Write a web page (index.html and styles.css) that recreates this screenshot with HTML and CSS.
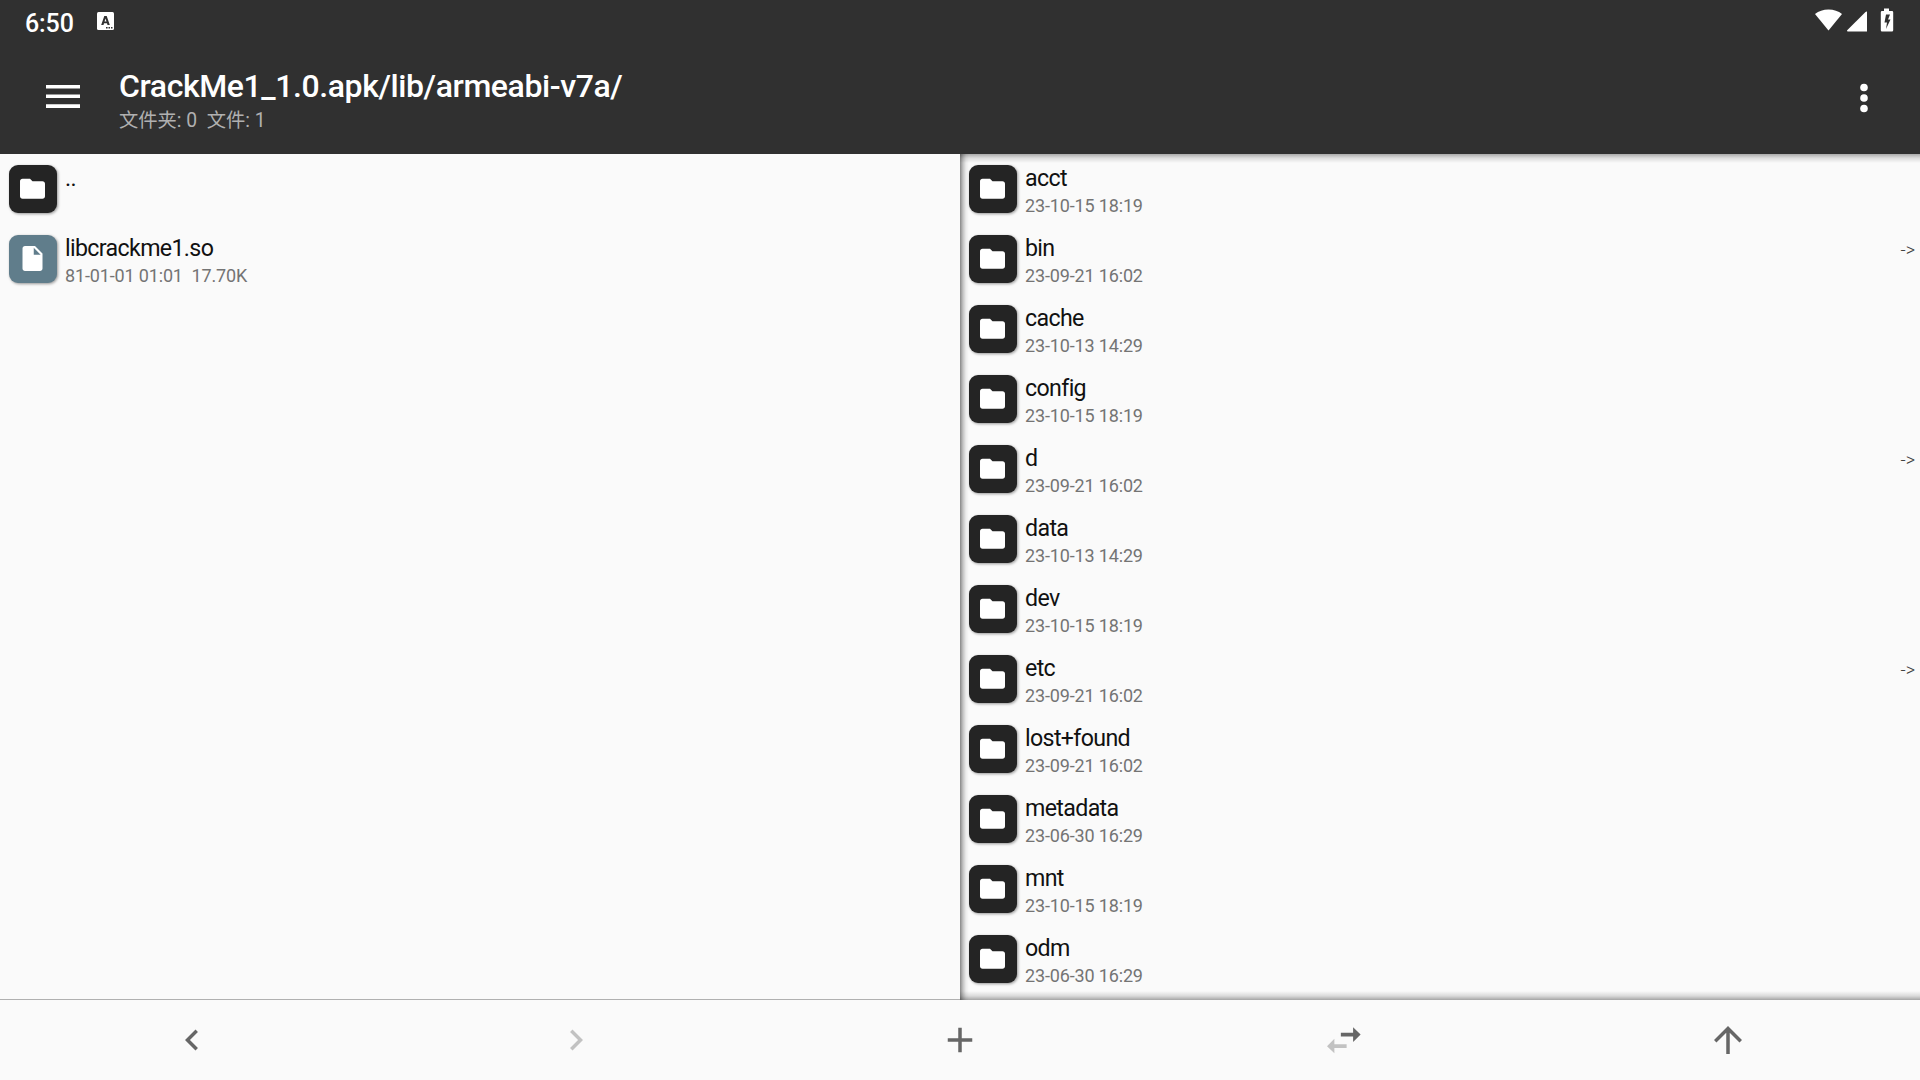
FILE: index.html
```html
<!DOCTYPE html>
<html lang="zh-CN">
<head>
<meta charset="utf-8">
<title>File manager</title>
<link rel="stylesheet" href="styles.css">
</head>
<body>
<svg width="0" height="0" class="defs">
  <symbol id="folder" viewBox="0.4 0.2 24 24"><path d="M10 4H4c-1.1 0-1.99.9-1.99 2L2 18c0 1.1.9 2 2 2h16c1.1 0 2-.9 2-2V8c0-1.1-.9-2-2-2h-8l-2-2z"/></symbol>
  <symbol id="file" viewBox="0.4 0.5 24 24"><path d="M6 2c-1.1 0-1.99.9-1.99 2L4 20c0 1.1.89 2 1.99 2H18c1.1 0 2-.9 2-2V8l-6-6H6zm7 7V3.5L18.5 9H13z"/></symbol>
</svg>
<div class="app">
  <header class="top">
    <div class="status">
      <span class="clock">6:50</span>
      <svg class="keyboard" width="17" height="18" viewBox="0 0 17 18"><rect width="17" height="18" rx="1.5" fill="#fff"/><path d="M4.2 13 7.3 4h2.4l3.1 9h-2.3l-.5-1.7H7L6.500 13zM7.500 9.600h2L8.500 6.400z" fill="#303030" fill-rule="evenodd"/><path d="M9 15h1.600v1.500H9zM11.500 15h1.500v1.500h-1.500zM14 15h1.500v1.500H14z" fill="#303030"/></svg>
      <span class="spacer"></span>
      <svg class="signals" width="80" height="24" viewBox="0 -.5 80 24" fill="#fff"><path d="M0 5.500Q5.500 1 13.500 1T27 5.500L13.500 22z"/><path d="M52 3v20H32.500q-.8-.6-.3-1.200L50.500 3.500q.8-.7 1.500-.5z"/><path fill-rule="evenodd" d="M69 0h5v2.500h3q1.200 0 1.200 1.200v18q0 1.200-1.200 1.200H67q-1.200 0-1.200-1.200v-18q0-1.200 1.200-1.200h2zM71 6l-1.500 8h2.500l-1 6.500L75.500 11H73l2-5z"/></svg>
    </div>
    <div class="toolbar">
      <svg class="menu" width="34" height="23" viewBox="0 0 34 23" fill="#fff"><path d="M0 0h34v3.500H0zM0 9.600h34v3.500H0zM0 19.300h34V23H0z"/></svg>
      <div class="heading">
        <h1>CrackMe1_1.0.apk/lib/armeabi-v7a/</h1>
        <p>文件夹: 0&nbsp; 文件: 1</p>
      </div>
      <svg class="more" width="8" height="30" viewBox="0 0 8 30" fill="#fff"><circle cx="4" cy="4.500" r="3.800"/><circle cx="4" cy="15" r="3.800"/><circle cx="4" cy="25.500" r="3.800"/></svg>
    </div>
  </header>
  <main class="panes">
    <section class="pane left">
      <div class="row"><span class="tile"><svg><use href="#folder"/></svg></span><div class="info"><b>..</b></div></div>
      <div class="row"><span class="tile so"><svg><use href="#file"/></svg></span><div class="info"><b>libcrackme1.so</b><small>81-01-01 01:01&nbsp; 17.70K</small></div></div>
    </section>
    <section class="pane right">
      <div class="row"><span class="tile"><svg><use href="#folder"/></svg></span><div class="info"><b>acct</b><small>23-10-15 18:19</small></div></div>
      <div class="row"><span class="tile"><svg><use href="#folder"/></svg></span><div class="info"><b>bin</b><small>23-09-21 16:02</small></div><i>-&gt;</i></div>
      <div class="row"><span class="tile"><svg><use href="#folder"/></svg></span><div class="info"><b>cache</b><small>23-10-13 14:29</small></div></div>
      <div class="row"><span class="tile"><svg><use href="#folder"/></svg></span><div class="info"><b>config</b><small>23-10-15 18:19</small></div></div>
      <div class="row"><span class="tile"><svg><use href="#folder"/></svg></span><div class="info"><b>d</b><small>23-09-21 16:02</small></div><i>-&gt;</i></div>
      <div class="row"><span class="tile"><svg><use href="#folder"/></svg></span><div class="info"><b>data</b><small>23-10-13 14:29</small></div></div>
      <div class="row"><span class="tile"><svg><use href="#folder"/></svg></span><div class="info"><b>dev</b><small>23-10-15 18:19</small></div></div>
      <div class="row"><span class="tile"><svg><use href="#folder"/></svg></span><div class="info"><b>etc</b><small>23-09-21 16:02</small></div><i>-&gt;</i></div>
      <div class="row"><span class="tile"><svg><use href="#folder"/></svg></span><div class="info"><b>lost+found</b><small>23-09-21 16:02</small></div></div>
      <div class="row"><span class="tile"><svg><use href="#folder"/></svg></span><div class="info"><b>metadata</b><small>23-06-30 16:29</small></div></div>
      <div class="row"><span class="tile"><svg><use href="#folder"/></svg></span><div class="info"><b>mnt</b><small>23-10-15 18:19</small></div></div>
      <div class="row"><span class="tile"><svg><use href="#folder"/></svg></span><div class="info"><b>odm</b><small>23-06-30 16:29</small></div></div>
    </section>
  </main>
  <nav class="bottom">
    <span><svg viewBox="0 0 24 24"><path d="M15.410 16.590 10.830 12l4.580-4.590L14 6l-6 6 6 6z"/></svg></span>
    <span><svg viewBox="0 0 24 24" class="off"><path d="M8.590 16.590 13.170 12 8.590 7.410 10 6l6 6-6 6z"/></svg></span>
    <span><svg viewBox="0 0 24 24"><path d="M19 13h-6v6h-2v-6H5v-2h6V5h2v6h6z"/></svg></span>
    <span><svg viewBox="0 0 24 24"><path class="off" d="M6.500 11.300 2.300 15.500l4.200 4.100v-3H13.500v-2.200H6.500z"/><path d="M21.500 8.900l-4.300-4.200v3.100H10.200V10h7v3.200z"/></svg></span>
    <span><svg viewBox="0 0 24 24"><path d="M4 12l1.410 1.410L11 7.830V20h2V7.830l5.580 5.590L20 12l-8-8z"/></svg></span>
  </nav>
</div>
</body>
</html>
```
FILE: styles.css
```css
* { box-sizing: border-box; }
body { margin: 0; font-family: Roboto, "Noto Sans CJK SC", sans-serif; background: #fafafa; }
.defs { display: block; }
.app { display: flex; flex-direction: column; width: 1920px; height: 1080px; overflow: hidden; }

.top { height: 154px; background: #303030; color: #fff; }
.status { display: flex; height: 42px; padding: 0 25px; }
.clock { width: 72px; padding-top: 9px; font-size: 25px; line-height: 29px; font-weight: 500; letter-spacing: -.1px; }
.keyboard { margin-top: 12px; }
.spacer { flex: 1; }
.signals { margin-top: 8px; }
.toolbar { display: flex; align-items: flex-start; padding: 0 52px 0 46px; }
.menu { margin-top: 43px; }
.heading { flex: 1; padding: 25px 0 0 39px; }
.heading h1 { margin: 0; font-size: 32px; line-height: 38px; font-weight: 500; letter-spacing: -.41px; }
.heading p { margin: 2px 0 0; font-size: 19.3px; line-height: 28px; color: #b0b0b0; }
.more { margin-top: 41px; }

.panes { display: flex; height: 846px; }
.pane { width: 960px; overflow: hidden; }
.left { border-bottom: 1px solid #b0b0b0; }
.right {
  background:
    linear-gradient(to right, rgba(0,0,0,.46), rgba(0,0,0,.22) 3px, rgba(0,0,0,.06) 6px, transparent 9px),
    linear-gradient(to bottom, rgba(0,0,0,.32), rgba(0,0,0,.12) 4px, transparent 9px),
    linear-gradient(to top, rgba(0,0,0,.34), rgba(0,0,0,.13) 4px, transparent 9px);
}
.row { display: flex; height: 70px; padding: 11px 5px 0 9px; }
.tile { flex: none; display: flex; align-items: center; justify-content: center; width: 48px; height: 48px; border-radius: 9px; background: #242424; box-shadow: 1px 1px 3px rgba(0,0,0,.4); }
.tile svg { width: 30px; height: 30px; fill: #fff; }
.so { background: #607d8b; }
.info { flex: 1; padding-left: 8px; }
.info b { display: block; font-size: 23.2px; line-height: 28px; margin-top: -1px; font-weight: 400; letter-spacing: -.65px; color: #111; }
.info small { display: block; font-size: 18px; line-height: 22px; margin-top: 3px; font-weight: 400; letter-spacing: -.15px; color: #747474; }
.row i { padding-top: 5px; font-style: normal; font-size: 18px; line-height: 20px; font-weight: 300; color: #404040; }

.bottom { display: flex; height: 80px; background: #fafafa; }
.bottom span { flex: 1; display: flex; align-items: center; justify-content: center; }
.bottom svg { width: 42px; height: 42px; fill: #666; }
.bottom .off { fill: #c2c2c2; }
```
